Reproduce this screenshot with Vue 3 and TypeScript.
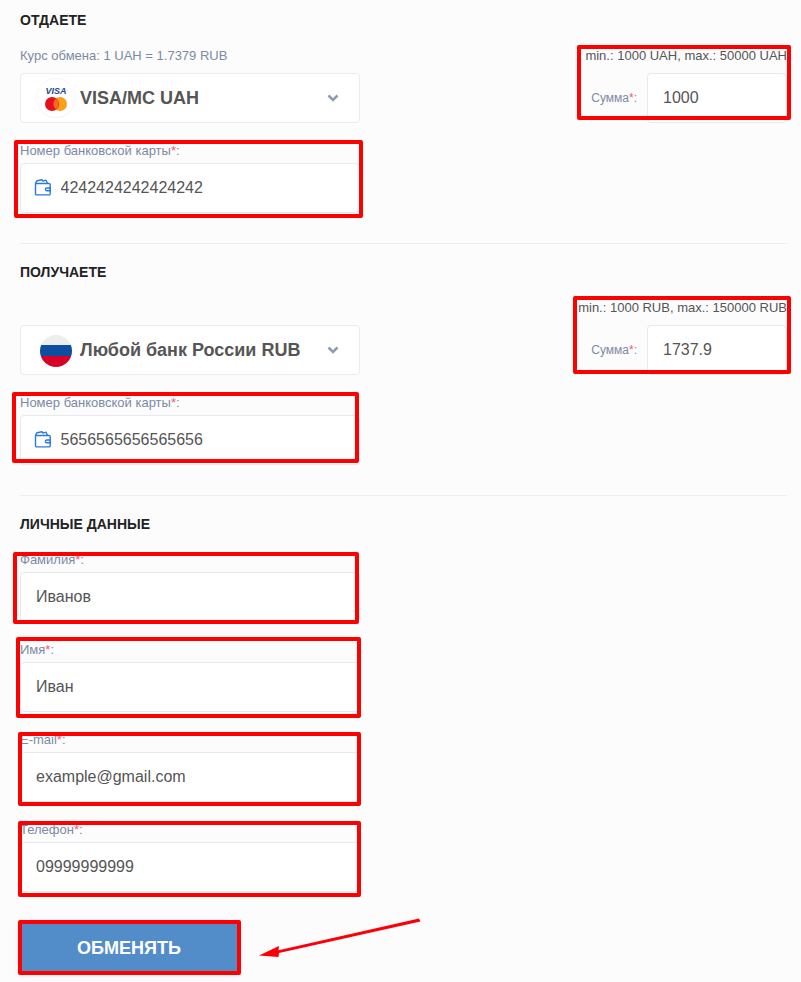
<script setup lang="ts">
interface Box { x: number; y: number; w: number; h: number }
const boxes: Box[] = [
  { x: 14, y: 140, w: 349, h: 78 },
  { x: 577, y: 45, w: 214, h: 75 },
  { x: 12, y: 392, w: 347, h: 71 },
  { x: 573, y: 296, w: 218, h: 78 },
  { x: 13, y: 552, w: 346, h: 72 },
  { x: 16, y: 637, w: 345, h: 81 },
  { x: 18, y: 732, w: 343, h: 74 },
  { x: 18, y: 821, w: 343, h: 76 },
  { x: 18, y: 920, w: 223, h: 55 },
]
const personal = [
  { label: 'Фамилия', value: 'Иванов' },
  { label: 'Имя', value: 'Иван' },
  { label: 'E-mail', value: 'example@gmail.com' },
  { label: 'Телефон', value: '09999999999' },
]
const boxStyle = (b: Box) => ({ left: `${b.x}px`, top: `${b.y}px`, width: `${b.w}px`, height: `${b.h}px` })
</script>

<template>
  <div class="page">
    <section class="section">
      <h2 class="title">ОТДАЕТЕ</h2>
      <div class="row">
        <div class="col">
          <div class="note">Курс обмена: 1 UAH = 1.7379 RUB</div>
          <div class="select">
            <span class="logo">
              <span class="visa">VISA</span>
              <svg class="mc" width="22" height="14" viewBox="0 0 22 14">
                <circle cx="15" cy="7" r="7" fill="#f9a01b" />
                <circle cx="7" cy="7" r="7" fill="#e5101f" />
                <path d="M11 1.500a7 7 0 0 1 0 11 7 7 0 0 1 0-11z" fill="#f76b1c" />
              </svg>
            </span>
            <span class="select-name">VISA/MC UAH</span>
            <svg class="chevron" width="12" height="8" viewBox="0 0 12 8"><path d="M1.500 1.500 6 6l4.500-4.500" fill="none" stroke="#8f9bb0" stroke-width="2.6" /></svg>
          </div>
        </div>
        <div class="sum">
          <div class="limits">min.: 1000 UAH, max.: 50000 UAH</div>
          <div class="sum-row">
            <label class="label">Сумма<i>*</i>:</label>
            <input class="input sum-input" value="1000" readonly />
          </div>
        </div>
      </div>
      <div class="field">
        <label class="label">Номер банковской карты<i>*</i>:</label>
        <div class="icon-input">
          <svg class="wallet" width="18" height="17" viewBox="0 0 18 17" fill="none" stroke="#2a7ade" stroke-width="1.4" stroke-linejoin="round">
            <path d="M1.500 4.500h13.500a1.200 1.200 0 0 1 1.200 1.200v9a1.200 1.200 0 0 1-1.200 1.200H2.700a1.200 1.200 0 0 1-1.200-1.200z" />
            <path d="M1.500 4.500 3 1.700l5-1 1 1.500 3-1 1.500 3.300" />
            <path d="M16.200 9h-3.400a1.400 1.400 0 0 0 0 2.800h3.400z" />
          </svg>
          <input class="input" value="4242424242424242" readonly />
        </div>
      </div>
    </section>

    <section class="section">
      <h2 class="title">ПОЛУЧАЕТЕ</h2>
      <div class="row">
        <div class="col">
          <div class="note"></div>
          <div class="select">
            <span class="flag"><b class="w"></b><b class="b"></b><b class="r"></b></span>
            <span class="select-name">Любой банк России RUB</span>
            <svg class="chevron" width="12" height="8" viewBox="0 0 12 8"><path d="M1.500 1.500 6 6l4.500-4.500" fill="none" stroke="#8f9bb0" stroke-width="2.6" /></svg>
          </div>
        </div>
        <div class="sum">
          <div class="limits">min.: 1000 RUB, max.: 150000 RUB</div>
          <div class="sum-row">
            <label class="label">Сумма<i>*</i>:</label>
            <input class="input sum-input" value="1737.9" readonly />
          </div>
        </div>
      </div>
      <div class="field">
        <label class="label">Номер банковской карты<i>*</i>:</label>
        <div class="icon-input">
          <svg class="wallet" width="18" height="17" viewBox="0 0 18 17" fill="none" stroke="#2a7ade" stroke-width="1.4" stroke-linejoin="round">
            <path d="M1.500 4.500h13.500a1.200 1.200 0 0 1 1.200 1.200v9a1.200 1.200 0 0 1-1.200 1.200H2.700a1.200 1.200 0 0 1-1.200-1.200z" />
            <path d="M1.500 4.500 3 1.700l5-1 1 1.500 3-1 1.500 3.300" />
            <path d="M16.200 9h-3.400a1.400 1.400 0 0 0 0 2.800h3.400z" />
          </svg>
          <input class="input" value="5656565656565656" readonly />
        </div>
      </div>
    </section>

    <section class="section last">
      <h2 class="title">ЛИЧНЫЕ ДАННЫЕ</h2>
      <div class="personal">
        <div v-for="p in personal" :key="p.label" class="field">
          <label class="label">{{ p.label }}<i>*</i>:</label>
          <input class="input plain" :value="p.value" readonly />
        </div>
      </div>
      <button class="submit" type="button">ОБМЕНЯТЬ</button>
    </section>

    <span v-for="(b, i) in boxes" :key="i" class="mark" :style="boxStyle(b)"></span>
    <svg class="arrow" width="801" height="982" viewBox="0 0 801 982">
      <polygon points="259,955.500 279,946 278.500,950.300 419,918.500 420.500,921.500 279,953 278.500,957" fill="#fb0007" />
    </svg>
  </div>
</template>

<style>
html, body { margin: 0; background: #fcfcfd; }
</style>

<style scoped>
.page {
  position: relative;
  box-sizing: border-box;
  width: 801px;
  height: 982px;
  overflow: hidden;
  padding: 0 14px 0 20px;
  background: #fcfcfd;
  font-family: "Liberation Sans", Arial, sans-serif;
  color: #555;
}
.section {
  height: 243px;
  margin-bottom: 8px;
  border-bottom: 1px solid #ececf1;
  box-sizing: content-box;
}
.section.last { height: auto; border: 0; margin: 0; }
.title {
  margin: 0;
  padding-top: 12px;
  height: 16px;
  font-size: 14px;
  line-height: 16px;
  font-weight: 700;
  color: #222;
}
.row { display: flex; justify-content: space-between; }
.col { width: 340px; }
.note {
  height: 18px;
  margin-top: 19px;
  margin-bottom: 8px;
  font-size: 13px;
  line-height: 18px;
  color: #7c8aa5;
}
.select {
  box-sizing: border-box;
  display: flex;
  align-items: center;
  width: 340px;
  height: 50px;
  padding: 0 20px 0 15px;
  background: #fff;
  border: 1px solid #e9ebf3;
  border-radius: 4px;
}
.select-name {
  flex: 1;
  margin-left: 4px;
  font-size: 18px;
  font-weight: 700;
  color: #555;
  white-space: nowrap;
}
.logo {
  box-sizing: border-box;
  flex: none;
  display: flex;
  flex-direction: column;
  align-items: center;
  justify-content: center;
  width: 40px;
  height: 40px;
  padding-top: 2px;
  border: 1px solid #f6f6f8;
  border-radius: 50%;
}
.visa {
  font-size: 9px;
  line-height: 9px;
  font-weight: 700;
  font-style: italic;
  color: #25478f;
  margin-bottom: 1px;
}
.mc { display: block; }
.flag {
  flex: none;
  display: flex;
  flex-direction: column;
  width: 32px;
  height: 32px;
  margin: 1px 4px 0;
  border-radius: 50%;
  overflow: hidden;
}
.flag b { flex: 1; display: block; }
.flag .w { background: #eeeeee; }
.flag .b { background: #0b4ea2; }
.flag .r { background: #d80027; }
.chevron { flex: none; }
.sum { display: flex; flex-direction: column; align-items: flex-end; }
.limits {
  margin-top: 19px;
  margin-bottom: 8px;
  height: 18px;
  font-size: 13px;
  line-height: 18px;
  color: #555;
  white-space: nowrap;
}
.sum-row { display: flex; align-items: center; gap: 10px; }
.label {
  display: block;
  font-size: 13px;
  line-height: 14px;
  color: #7c8aa5;
  white-space: nowrap;
}
.label i { font-style: normal; color: #f2596b; }
.input {
  box-sizing: border-box;
  display: block;
  width: 340px;
  height: 50px;
  padding: 0 15px;
  background: #fff;
  border: 1px solid #e7e8f0;
  border-radius: 4px;
  outline: 0;
  font-family: inherit;
  font-size: 16px;
  color: #555;
}
.sum-input { width: 140px; }
.field { margin-top: 20px; }
.field .label { box-sizing: border-box; height: 20px; padding-top: 1px; }
.sum-row .label { font-size: 12px; }
.icon-input { position: relative; width: 340px; }
.icon-input .input { padding-left: 39.500px; }
.wallet { position: absolute; left: 14px; top: 16px; }
.personal { padding-top: 20px; }
.personal .field:first-child { margin-top: 0; }
.submit {
  display: block;
  width: 218px;
  height: 51px;
  margin-top: 30px;
  padding: 1px 0 0;
  border: 0;
  border-radius: 2px;
  background: #528dc9;
  box-shadow: 0 1px 6px rgba(82, 141, 201, 0.3);
  font-family: inherit;
  font-size: 18px;
  font-weight: 700;
  color: #fff;
}
.mark {
  position: absolute;
  box-sizing: border-box;
  border: 4px solid #fe0000;
  border-radius: 2px;
  pointer-events: none;
}
.arrow { position: absolute; left: 0; top: 0; pointer-events: none; }
</style>
